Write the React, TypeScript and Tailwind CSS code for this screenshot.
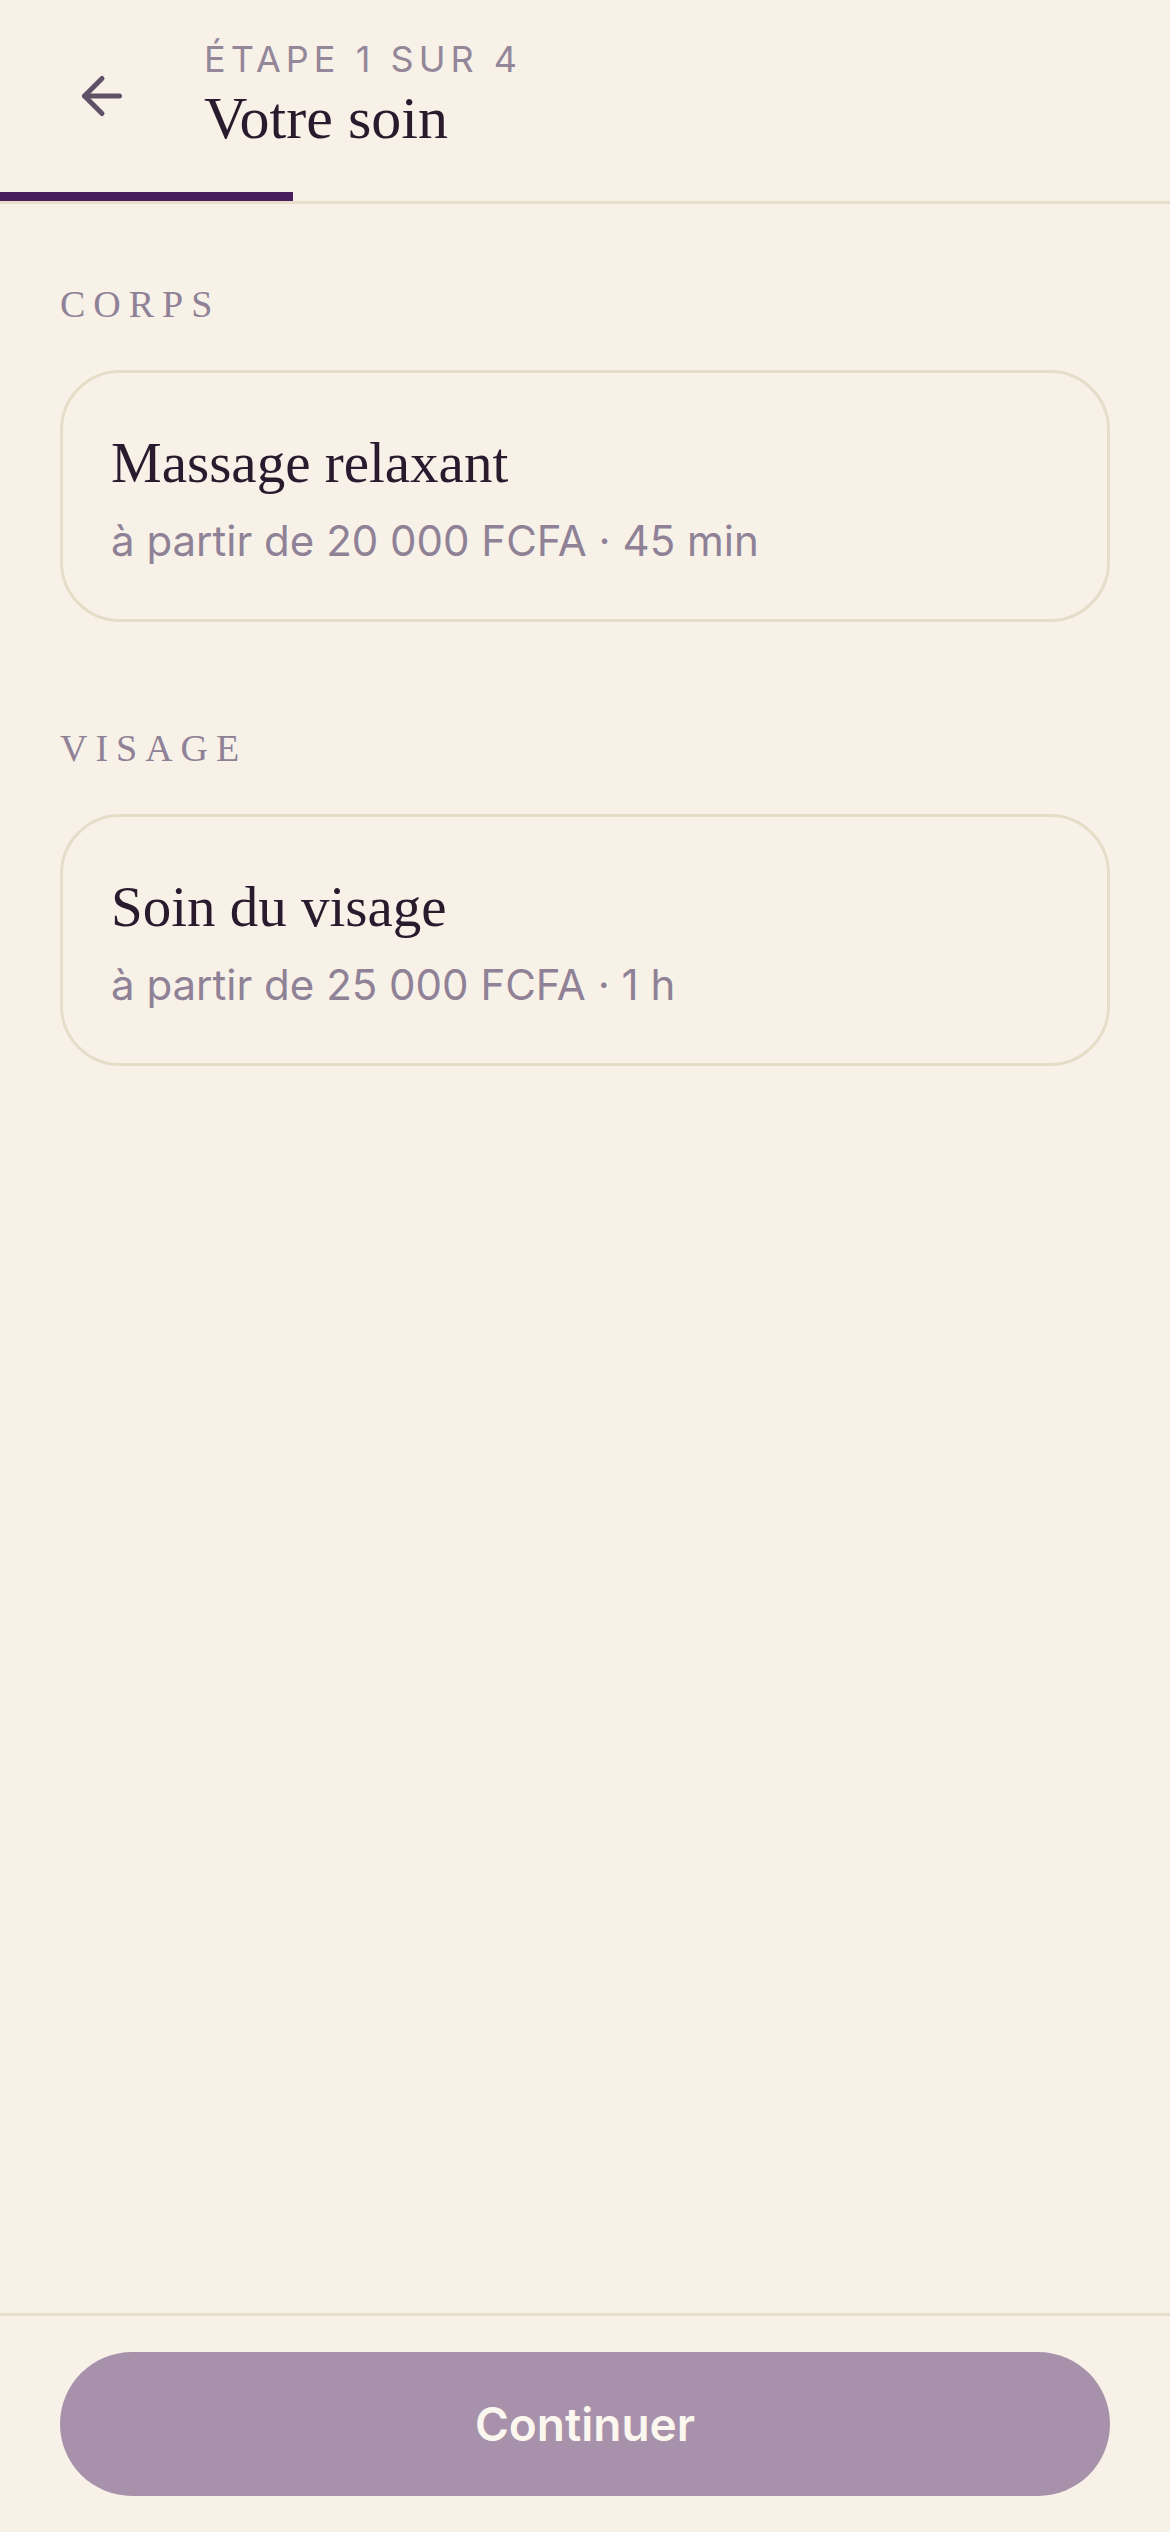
import React from "react";

const serif = "font-['Liberation_Serif','Times_New_Roman',serif]";
const sans = "font-['Inter','Liberation_Sans',sans-serif]";

function ArrowLeft() {
  return (
    <svg width="60" height="60" viewBox="0 0 24 24" fill="none" stroke="#5f5268" strokeWidth="2" strokeLinecap="round" strokeLinejoin="round">
      <path d="m12 19-7-7 7-7" />
      <path d="M19 12H5" />
    </svg>
  );
}

function Card({ title, sub }: { title: string; sub: string }) {
  return (
    <div className="rounded-[60px] border-[3px] border-[#e6ddc8] bg-[#f8f1e8] px-[48px] py-[48px]">
      <div className={`${serif} text-[57px] leading-[84px] text-[#2a1a2d]`}>{title}</div>
      <div className={`${sans} mt-[6px] text-[42px] leading-[60px] text-[#8f8297]`}>{sub}</div>
    </div>
  );
}

function Section({ label, children }: { label: string; children: React.ReactNode }) {
  return (
    <section className="flex flex-col">
      <div className={`${serif} mb-[42px] text-[38px] leading-[48px] tracking-[0.21em] text-[#8f8297]`}>{label}</div>
      {children}
    </section>
  );
}

export default function App() {
  return (
    <div className={`flex min-h-screen flex-col bg-[#f8f1e8] ${sans}`}>
      <header className="border-b-[3px] border-[#e7dfcc]">
        <div className="flex h-[192px] items-center pl-[42px]">
          <button className="flex h-[120px] w-[120px] items-center justify-center">
            <ArrowLeft />
          </button>
          <div className="ml-[42px] flex flex-col">
            <div className={`${sans} -mt-[4px] text-[36px] leading-[48px] tracking-[0.14em] text-[#948799]`}>ÉTAPE 1 SUR 4</div>
            <div className={`${serif} text-[60px] leading-[70px] text-[#2a1a2d]`}>Votre soin</div>
          </div>
        </div>
        <div className="h-[9px]">
          <div className="h-full w-1/4 bg-[#4a1d5c]" />
        </div>
      </header>

      <main className="flex flex-1 flex-col gap-[102px] px-[60px] pt-[76px]">
        <Section label="CORPS">
          <Card title="Massage relaxant" sub="à partir de 20 000 FCFA · 45 min" />
        </Section>
        <Section label="VISAGE">
          <Card title="Soin du visage" sub="à partir de 25 000 FCFA · 1 h" />
        </Section>
      </main>

      <footer className="border-t-[3px] border-[#e7dfcc] px-[60px] py-[36px]">
        <button className={`${sans} flex h-[144px] w-full items-center justify-center rounded-full bg-[#a891aa] text-[46px] font-semibold text-[#fbf6ee]`}>
          Continuer
        </button>
      </footer>
    </div>
  );
}
